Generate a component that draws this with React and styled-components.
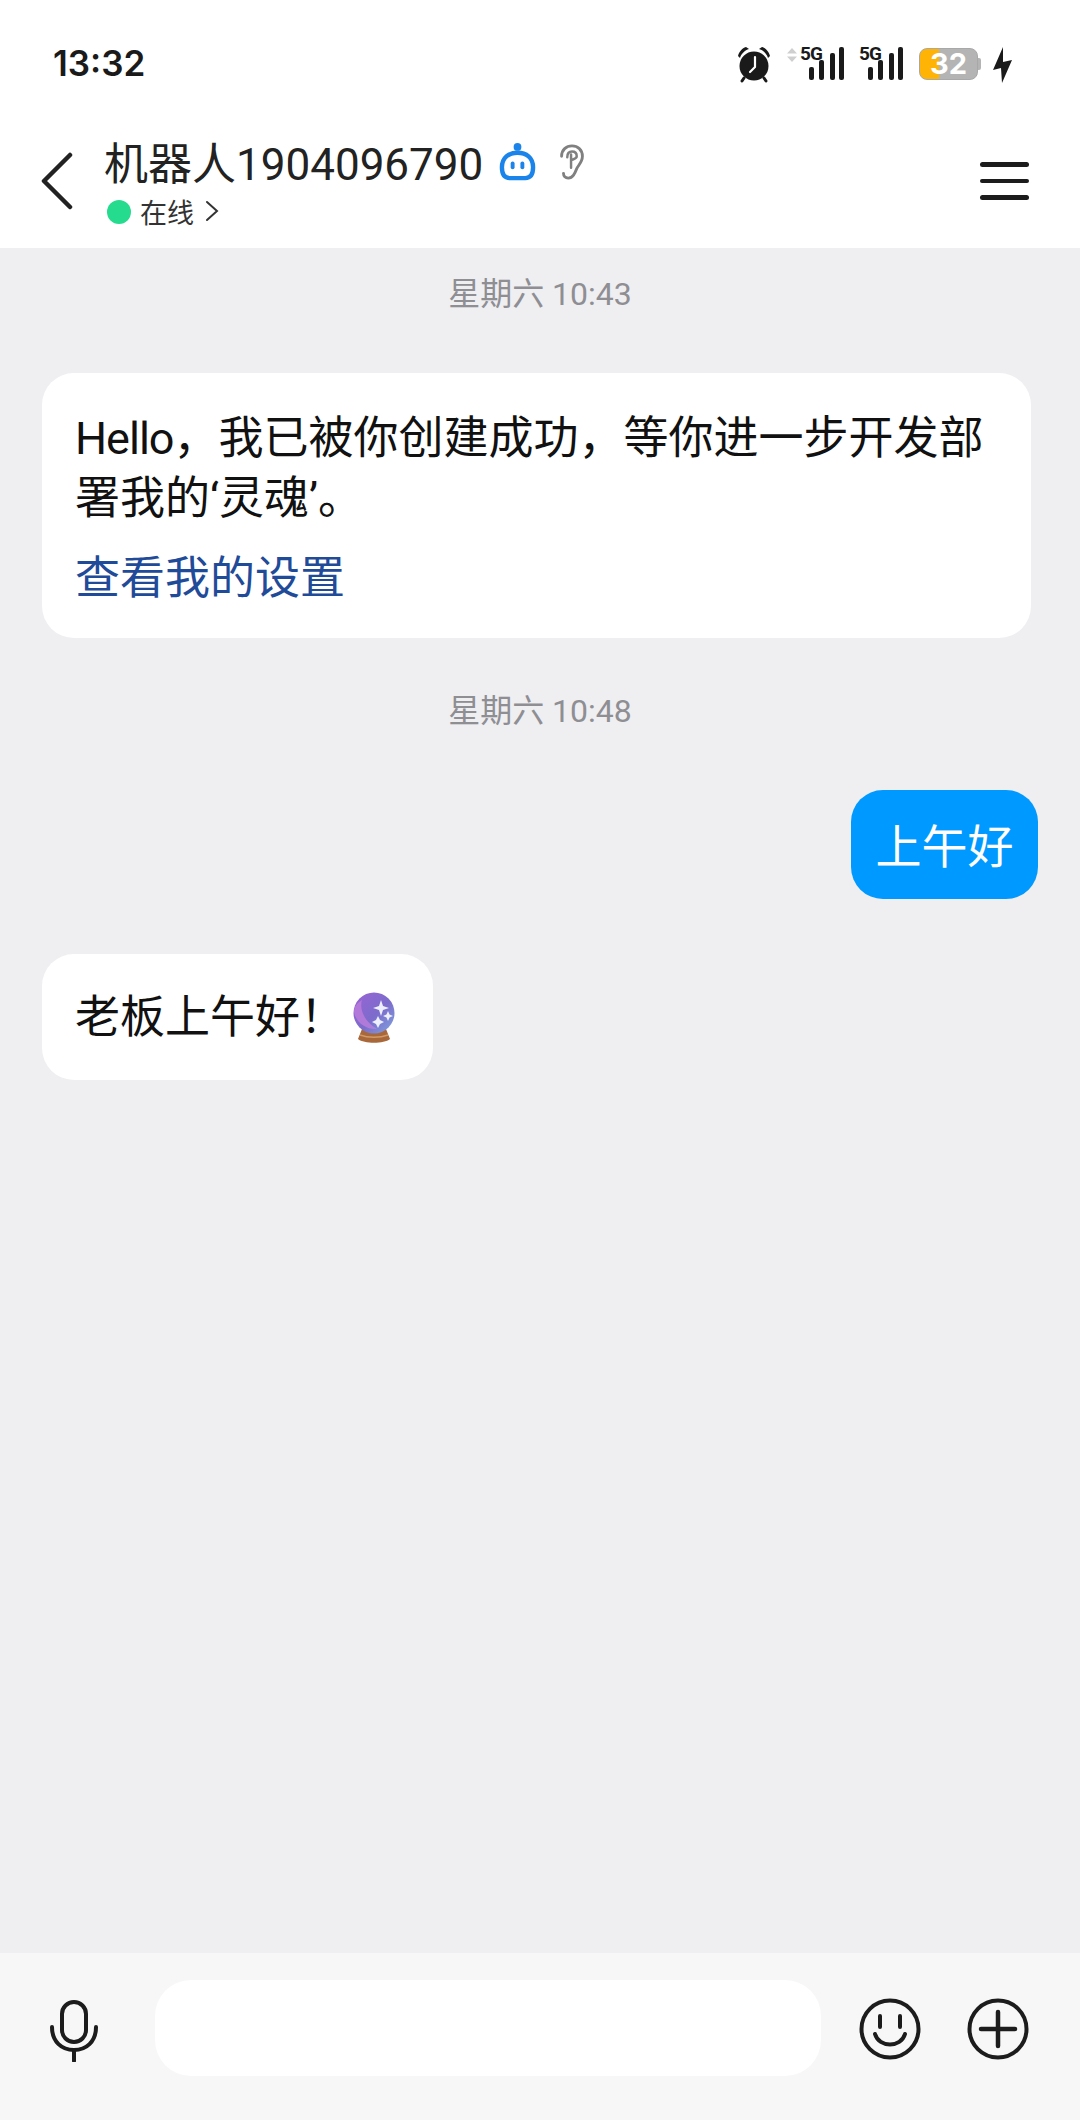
import styled, { createGlobalStyle } from "styled-components";

const GlobalStyle = createGlobalStyle`
  html, body {
    margin: 0;
    padding: 0;
    background: #efeff2;
  }
  * {
    box-sizing: border-box;
  }
`;

const Page = styled.div`
  width: 1080px;
  height: 2120px;
  display: flex;
  flex-direction: column;
  background: #efeff2;
  color: #111;
  font-family: Roboto, "Noto Sans CJK SC", sans-serif;
  overflow: hidden;
`;

// status bar
const StatusBar = styled.div`
  height: 110px;
  background: #fff;
  display: flex;
  align-items: flex-start;
  justify-content: space-between;
  padding: 46px 67px 0 53px;
`;

const Time = styled.div`
  font-family: Inter, sans-serif;
  font-size: 35px;
  line-height: 35px;
  font-weight: 600;
  color: #1a1a1a;
`;

const StatusIcons = styled.div`
  display: flex;
  align-items: flex-start;
  padding-top: 1px;
`;

const AlarmSvg = styled.svg`
  display: block;
  margin-right: 16px;
`;

const ArrowsSvg = styled.svg`
  display: block;
  margin: 1px 3px 0 0;
`;

const SignalWrap = styled.div`
  position: relative;
  width: 45px;
  height: 33px;
  margin-right: ${(p) => p.$gap}px;
`;

const SignalLabel = styled.span`
  position: absolute;
  left: 0;
  top: 0;
  font-family: Roboto, sans-serif;
  font-size: 19px;
  line-height: 14px;
  font-weight: 700;
  letter-spacing: -0.8px;
  color: #1a1a1a;
`;

const Battery = styled.div`
  position: relative;
  width: 59px;
  height: 32px;
  margin: 1px 15px 0 0;
  border-radius: 8px;
  border: 1px solid #a8a8a8;
  background: linear-gradient(90deg, #ffb305 0 34%, #b4b4b4 34% 100%);
  color: #fff;
  font-family: Inter, sans-serif;
  font-size: 29px;
  line-height: 30px;
  font-weight: 700;
  text-align: center;

  &::after {
    content: "";
    position: absolute;
    right: -4px;
    top: 9px;
    width: 3px;
    height: 12px;
    border-radius: 0 2px 2px 0;
    background: #b4b4b4;
  }
`;

const BoltSvg = styled.svg`
  display: block;
`;

// nav bar
const NavBar = styled.div`
  height: 138px;
  background: #fff;
  display: flex;
  align-items: flex-start;
  padding: 0 51px 0 40px;
`;

const BackButton = styled.div`
  width: 65px;
  padding-top: 42px;
  display: flex;
`;

const TitleBlock = styled.div`
  flex: 1;
  display: flex;
  flex-direction: column;
`;

const TitleRow = styled.div`
  display: flex;
  align-items: center;
  height: 60px;
  margin-top: 25px;
`;

const Title = styled.div`
  font-size: 44px;
  line-height: 60px;
  color: #222;
  margin-left: -1px;
`;

const RobotSvg = styled.svg`
  display: block;
  margin: -6px 0 0 16px;
`;

const EarSvg = styled.svg`
  display: block;
  margin: -6px 0 0 23px;
`;

const StatusRow = styled.div`
  display: flex;
  align-items: center;
  height: 32px;
  margin: 0 0 0 2px;
  font-size: 27px;
  color: #333;
`;

const OnlineDot = styled.span`
  width: 24px;
  height: 24px;
  margin-top: 1px;
  border-radius: 50%;
  background: #25dc8e;
  margin-right: 9px;
`;

const ChevronSvg = styled.svg`
  margin-left: 11px;
`;

const Menu = styled.div`
  width: 49px;
  margin-top: 52px;
  display: flex;
  flex-direction: column;
  gap: 12px;
`;

const MenuLine = styled.span`
  height: 4.5px;
  border-radius: 3px;
  background: #1c1c1c;
`;

// chat
const Chat = styled.div`
  flex: 1;
  display: flex;
  flex-direction: column;
  padding: 0 42px;
`;

const Stamp = styled.div`
  font-size: 32px;
  line-height: 40px;
  color: #8e8e93;
  text-align: center;
  margin-top: ${(p) => p.$top}px;
`;

const Bubble = styled.div`
  background: #fff;
  border-radius: 32px;
  color: #111;
  font-size: 45px;
  line-height: 60px;
  margin-top: ${(p) => p.$top}px;
`;

const IntroBubble = styled(Bubble)`
  width: 989px;
  height: 265px;
  padding: 36px 20px 0 33px;
`;

const Latin = styled.span`
  letter-spacing: -1px;
`;

const SettingsLink = styled.div`
  color: #1f4b99;
  margin-top: 20px;
`;

const SentBubble = styled(Bubble)`
  align-self: flex-end;
  width: 187px;
  height: 109px;
  padding-top: 27px;
  background: #0099ff;
  color: #fff;
  font-size: 46px;
  text-align: center;
`;

const ReplyBubble = styled(Bubble)`
  align-self: flex-start;
  display: flex;
  align-items: center;
  width: 391px;
  height: 126px;
  padding: 2px 0 0 33px;
`;

const CrystalBall = styled.svg`
  margin-left: 8px;
`;

// input bar
const InputBar = styled.div`
  height: 167px;
  background: #f7f7f8;
  display: flex;
  align-items: flex-start;
  padding: 27px 0 0 50px;
`;

const MicWrap = styled.div`
  width: 105px;
  padding-top: 20px;
`;

const MicSvg = styled.svg`
  display: block;
`;

const TextBox = styled.div`
  width: 666px;
  height: 96px;
  background: #fff;
  border-radius: 36px;
`;

const RoundIcons = styled.div`
  display: flex;
  gap: 46px;
  margin: 18px 0 0 38px;
`;

function Signal({ gap }) {
  return (
    <SignalWrap $gap={gap}>
      <SignalLabel>5G</SignalLabel>
      <svg width="45" height="33" viewBox="0 0 45 33">
        <rect x="9" y="20" width="5" height="13" rx="2" fill="#1a1a1a" />
        <rect x="19" y="13" width="5" height="20" rx="2" fill="#1a1a1a" />
        <rect x="30" y="6" width="5" height="27" rx="2" fill="#1a1a1a" />
        <rect x="39" y="0" width="5" height="33" rx="2" fill="#1a1a1a" />
      </svg>
    </SignalWrap>
  );
}

function AlarmIcon() {
  return (
    <AlarmSvg width="34" height="36" viewBox="0 0 34 36">
      <circle cx="17" cy="19" r="14.5" fill="#1a1a1a" />
      <path d="M1 9 C2 5 5 1 9 0 L12 2 C8 3 4 7 3 11 Z M33 9 C32 5 29 1 25 0 L22 2 C26 3 30 7 31 11 Z" fill="#1a1a1a" />
      <path d="M7 31 L5 34 M27 31 L29 34" stroke="#1a1a1a" strokeWidth="3" strokeLinecap="round" />
      <path d="M18 10 V20 L13 25" stroke="#fff" strokeWidth="2.2" fill="none" strokeLinecap="round" strokeLinejoin="round" />
    </AlarmSvg>
  );
}

function DataArrows() {
  return (
    <ArrowsSvg width="10" height="14" viewBox="0 0 10 14">
      <path d="M5 0 L10 5.5 H0 Z M5 14 L10 8.5 H0 Z" fill="#cfcfcf" />
    </ArrowsSvg>
  );
}

function Bolt() {
  return (
    <BoltSvg width="20" height="36" viewBox="0 0 20 36">
      <path d="M10 0 L0 23 L8 21 L9 36 L19 13 L10 15 Z" fill="#1a1a1a" />
    </BoltSvg>
  );
}

function RobotIcon() {
  return (
    <RobotSvg width="37" height="38" viewBox="0 0 38 39">
      <circle cx="19" cy="4" r="4" fill="#1a84ea" />
      <path
        d="M3 25 C3 15 10 10 19 10 C28 10 35 15 35 25 C35 33 32 36 27 36 H11 C6 36 3 33 3 25 Z"
        fill="none"
        stroke="#1a84ea"
        strokeWidth="4.5"
      />
      <rect x="12" y="19" width="4" height="8" rx="2" fill="#1a84ea" />
      <rect x="22" y="19" width="4" height="8" rx="2" fill="#1a84ea" />
    </RobotSvg>
  );
}

function EarIcon() {
  return (
    <EarSvg width="26" height="36" viewBox="0 0 26 38">
      <path
        d="M2 13 C2 6 7 2 13 2 C19 2 24 6 24 13 C24 19 20 22 18 26 C16 31 14 36 9 36 C6 36 4 34 4 31"
        fill="none"
        stroke="#808080"
        strokeWidth="3"
        strokeLinecap="round"
      />
      <path
        d="M8 14 C8 10 10 8 13 8 C16 8 18 10 18 13 C18 16 14 16 12 17 M12 11 V25"
        fill="none"
        stroke="#808080"
        strokeWidth="2.6"
        strokeLinecap="round"
      />
    </EarSvg>
  );
}

function BallIcon() {
  return (
    <CrystalBall width="42" height="52" viewBox="0 0 42 52">
      <defs>
        <linearGradient id="ball" x1="0" y1="0" x2="1" y2="1">
          <stop offset="0" stopColor="#9a63d6" />
          <stop offset="0.55" stopColor="#7c6ccb" />
          <stop offset="1" stopColor="#7fa6de" />
        </linearGradient>
      </defs>
      <path d="M9 37 H33 L37 47 C31 52 11 52 5 47 Z" fill="#a8683a" />
      <path d="M7 43 C15 46 27 46 35 43" stroke="#d19a66" strokeWidth="1.5" fill="none" />
      <circle cx="21" cy="21" r="20.5" fill="url(#ball)" />
      <path d="M9 8 C6 18 12 30 24 37 C14 38 3 31 1 20 C1 15 4 11 9 8 Z" fill="#c07fdc" opacity="0.75" />
      <path d="M28 8 L30 14 L36 16 L30 18 L28 24 L26 18 L20 16 L26 14 Z" fill="#eef0ff" />
      <path d="M35 19 L36.5 22.5 L40 24 L36.5 25.5 L35 29 L33.5 25.5 L30 24 L33.5 22.5 Z" fill="#eef0ff" />
      <path d="M25 24 L27 28 L31 30 L27 32 L25 36 L23 32 L19 30 L23 28 Z" fill="#eef0ff" />
    </CrystalBall>
  );
}

export default function App() {
  return (
    <Page>
      <GlobalStyle />
      <StatusBar>
        <Time>13:32</Time>
        <StatusIcons>
          <AlarmIcon />
          <DataArrows />
          <Signal gap={14} />
          <Signal gap={15} />
          <Battery>32</Battery>
          <Bolt />
        </StatusIcons>
      </StatusBar>

      <NavBar>
        <BackButton>
          <svg width="34" height="58" viewBox="0 0 34 58">
            <path d="M30 3 L4 29 L30 55" fill="none" stroke="#222" strokeWidth="4.5" strokeLinecap="round" strokeLinejoin="round" />
          </svg>
        </BackButton>
        <TitleBlock>
          <TitleRow>
            <Title>机器人1904096790</Title>
            <RobotIcon />
            <EarIcon />
          </TitleRow>
          <StatusRow>
            <OnlineDot />
            在线
            <ChevronSvg width="14" height="22" viewBox="0 0 14 22">
              <path d="M2 2 L12 11 L2 20" fill="none" stroke="#333" strokeWidth="2" strokeLinecap="round" />
            </ChevronSvg>
          </StatusRow>
        </TitleBlock>
        <Menu>
          <MenuLine />
          <MenuLine />
          <MenuLine />
        </Menu>
      </NavBar>

      <Chat>
        <Stamp $top={26}>星期六 10:43</Stamp>
        <IntroBubble $top={59}>
          <Latin>Hello</Latin>，我已被你创建成功，等你进一步开发部
          <br />
          署我的‘灵魂’。
          <SettingsLink>查看我的设置</SettingsLink>
        </IntroBubble>
        <Stamp $top={53}>星期六 10:48</Stamp>
        <SentBubble $top={59}>上午好</SentBubble>
        <ReplyBubble $top={55}>
          老板上午好！
          <BallIcon />
        </ReplyBubble>
      </Chat>

      <InputBar>
        <MicWrap>
          <MicSvg width="48" height="62" viewBox="0 0 48 62">
            <rect x="12" y="2" width="24" height="40" rx="12" fill="none" stroke="#1c1c1c" strokeWidth="4" />
            <path d="M2 27 C2 42 12 50 24 50 C36 50 46 42 46 27" fill="none" stroke="#1c1c1c" strokeWidth="4" strokeLinecap="round" />
            <path d="M24 50 V61" stroke="#1c1c1c" strokeWidth="4" strokeLinecap="round" />
          </MicSvg>
        </MicWrap>
        <TextBox />
        <RoundIcons>
          <svg width="62" height="62" viewBox="0 0 62 62">
            <circle cx="31" cy="31" r="28.5" fill="none" stroke="#1c1c1c" strokeWidth="4" />
            <path d="M21 18 V29 M41 18 V29" stroke="#1c1c1c" strokeWidth="4" strokeLinecap="round" />
            <path d="M16 36 C20 50 42 50 46 36" fill="none" stroke="#1c1c1c" strokeWidth="4" strokeLinecap="round" />
          </svg>
          <svg width="62" height="62" viewBox="0 0 62 62">
            <circle cx="31" cy="31" r="28.5" fill="none" stroke="#1c1c1c" strokeWidth="4" />
            <path d="M14 31 H48 M31 14 V48" stroke="#1c1c1c" strokeWidth="4.5" strokeLinecap="round" />
          </svg>
        </RoundIcons>
      </InputBar>
    </Page>
  );
}
